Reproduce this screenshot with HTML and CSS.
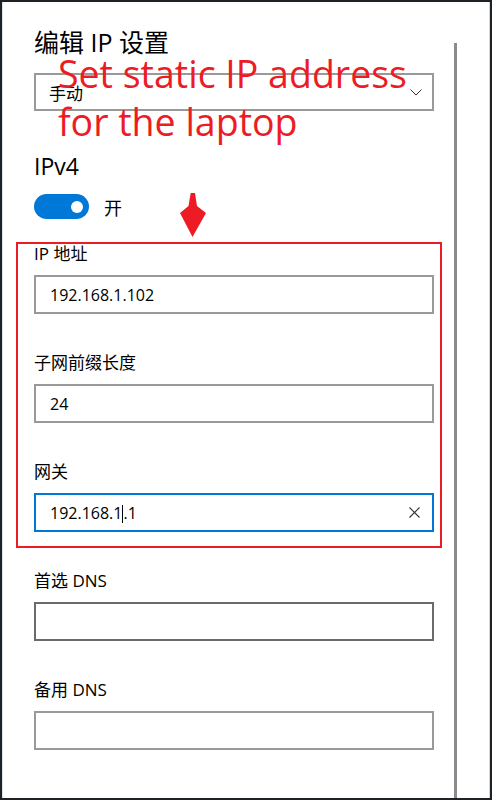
FILE: index.html
```html
<!DOCTYPE html>
<html lang="zh-CN">
<head>
<meta charset="utf-8">
<title>编辑 IP 设置</title>
<link rel="stylesheet" href="styles.css">
</head>
<body>
<div class="window">
  <div class="pane">
    <main class="content">
      <h1 class="title">编辑 IP 设置</h1>
      <div class="select">
        <span>手动</span>
        <svg class="chev" width="12" height="7" viewBox="0 0 12 7"><polyline points="0.5,0.5 6,6 11.5,0.5" fill="none" stroke="#333" stroke-width="1"/></svg>
      </div>
      <h2 class="section">IPv4</h2>
      <div class="toggle-row">
        <span class="toggle"><span class="knob"></span></span>
        <span class="toggle-label">开</span>
      </div>
      <div class="highlight">
        <div class="field">
          <label>IP 地址</label>
          <div class="input">192.168.1.102</div>
        </div>
        <div class="field">
          <label>子网前缀长度</label>
          <div class="input">24</div>
        </div>
        <div class="field">
          <label>网关</label>
          <div class="input focused">
            <span class="value">192.168.1<span class="caret"></span>.1</span>
            <svg class="clear" width="11" height="11" viewBox="0 0 11 11"><path d="M0.5 0.5 L10.5 10.5 M10.5 0.5 L0.5 10.5" stroke="#333" stroke-width="1.1" fill="none"/></svg>
          </div>
        </div>
      </div>
      <div class="plain">
        <div class="field">
          <label>首选 DNS</label>
          <div class="input hover"></div>
        </div>
        <div class="field">
          <label>备用 DNS</label>
          <div class="input"></div>
        </div>
      </div>
    </main>
    <div class="scrollbar"></div>
  </div>
  <div class="annotation">Set static IP address<br>for the laptop</div>
  <svg class="arrow" width="30" height="48" viewBox="0 0 30 48"><polygon points="12.7,2 17,2 19,15 28,22 14.5,46 2,22 10.5,15" fill="#ed1c24"/></svg>
</div>
</body>
</html>
```

FILE: styles.css
```css
html, body {
  margin: 0;
  padding: 0;
  background: #fff;
}

body {
  font-family: "Open Sans", "Noto Sans CJK SC", sans-serif;
  color: #000;
}

.window {
  position: relative;
  width: 492px;
  height: 800px;
  box-sizing: border-box;
  border: 2px solid #1d2227;
  display: flex;
}

.pane {
  flex: 1;
  display: flex;
  background: #fff;
  border-left: 1px solid #dfe4ea;
  border-right: 1px solid #d6d6d6;
  overflow: hidden;
}

.content {
  flex: none;
  width: 400px;
  padding-left: 31px;
}

.scrollbar {
  flex: none;
  width: 3px;
  margin-left: 20px;
  margin-top: 41px;
  background: #8b8b8b;
}

.title {
  margin: 24px 0 0;
  font-size: 25px;
  font-weight: 400;
  line-height: 32px;
}

.select {
  margin-top: 15px;
  height: 38px;
  box-sizing: border-box;
  border: 2px solid #999;
  display: flex;
  align-items: center;
  justify-content: space-between;
  padding: 0 10px 0 13px;
  font-size: 17px;
}

.section {
  margin: 40px 0 0;
  font-size: 23px;
  font-weight: 400;
  line-height: 30px;
}

.toggle-row {
  margin-top: 13px;
  height: 25px;
  display: flex;
  align-items: center;
  gap: 15px;
}

.toggle {
  width: 55px;
  height: 25px;
  box-sizing: border-box;
  border-radius: 13px;
  background: #0078d7;
  display: flex;
  align-items: center;
  justify-content: flex-end;
  padding-right: 6px;
}

.knob {
  width: 12px;
  height: 12px;
  border-radius: 50%;
  background: #fff;
}

.toggle-label {
  font-size: 18px;
}

.highlight {
  margin: 23px -8px 0 -18px;
  border: 2px solid #ed1c24;
  padding: 0 6px 14px 16px;
}

.plain {
  margin-top: 23px;
}

.field + .field {
  margin-top: 39px;
}

.field label {
  display: block;
  font-size: 17px;
  line-height: 20px;
}

.input {
  margin-top: 11px;
  height: 39px;
  box-sizing: border-box;
  border: 2px solid #999;
  display: flex;
  align-items: center;
  justify-content: space-between;
  padding: 0 12px 0 14px;
  font-size: 16px;
}

.input.focused {
  border-color: #0078d7;
}

.input.hover {
  border-color: #6b6b6b;
}

.caret {
  display: inline-block;
  width: 0;
  height: 18px;
  border-left: 1px solid #000;
  vertical-align: -4px;
}

.annotation {
  position: absolute;
  left: 56px;
  top: 48px;
  font-size: 37.5px;
  line-height: 48px;
  color: #ed1c24;
  white-space: nowrap;
}

.arrow {
  position: absolute;
  left: 176px;
  top: 189px;
}
```
